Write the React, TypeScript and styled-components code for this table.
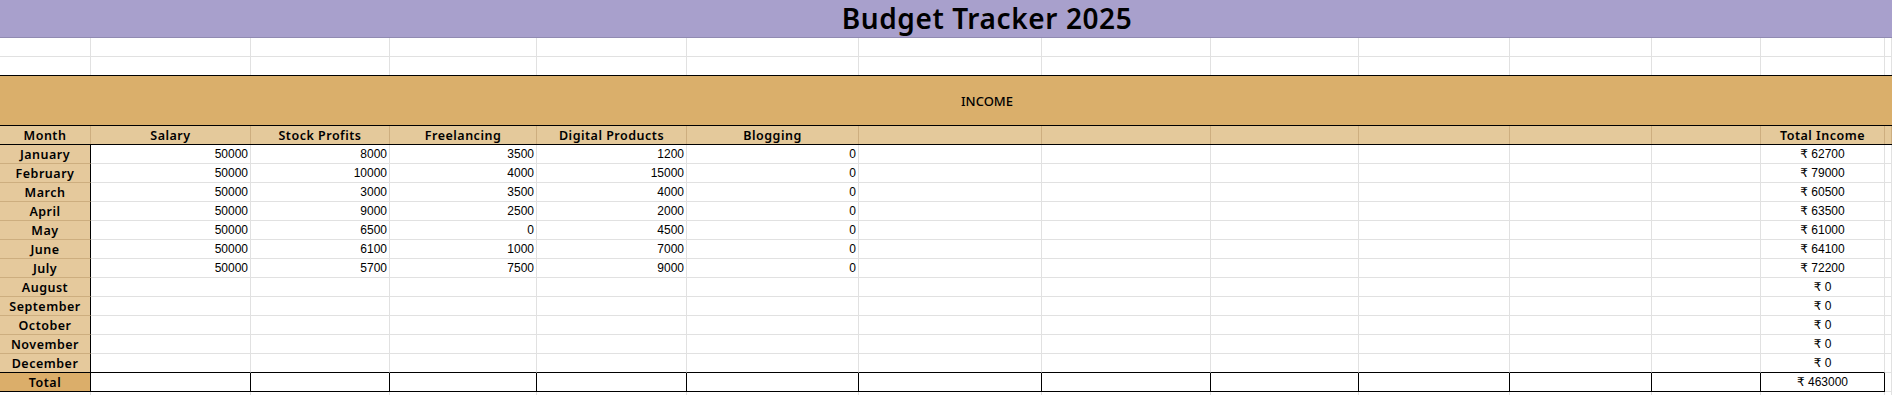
import React from 'react'
import styled, { createGlobalStyle } from 'styled-components'

// sheet column widths, last one is the sliver of the next column at the edge
const COLS = '91px 160px 139px 147px 150px 172px 183px 169px 148px 151px 142px 109px 124px 1fr'
const LABEL_FONT = `"Noto Sans", "DejaVu Sans", sans-serif`
const NUM_FONT = `"Liberation Sans", "DejaVu Sans", Arial, sans-serif`

const GRID = '#e1e1e1'
const TAN_LINE = '#cdae7f'
const BLACK = '#000000'

type Month = { name: string; values: number[] }

const months: Month[] = [
  { name: 'January', values: [50000, 8000, 3500, 1200, 0] },
  { name: 'February', values: [50000, 10000, 4000, 15000, 0] },
  { name: 'March', values: [50000, 3000, 3500, 4000, 0] },
  { name: 'April', values: [50000, 9000, 2500, 2000, 0] },
  { name: 'May', values: [50000, 6500, 0, 4500, 0] },
  { name: 'June', values: [50000, 6100, 1000, 7000, 0] },
  { name: 'July', values: [50000, 5700, 7500, 9000, 0] },
  { name: 'August', values: [] },
  { name: 'September', values: [] },
  { name: 'October', values: [] },
  { name: 'November', values: [] },
  { name: 'December', values: [] },
]

const headings = ['Salary', 'Stock Profits', 'Freelancing', 'Digital Products', 'Blogging', '', '', '', '', '', '']

const sum = (vals: number[]) => vals.reduce((a, b) => a + b, 0)

export default function App() {
  const grand = sum(months.map((m) => sum(m.values)))

  return (
    <>
      <GlobalStyle />
      <Sheet>
        <TitleBar>Budget Tracker 2025</TitleBar>

        <SheetRow $h={19}>
          {Array.from({ length: 14 }).map((_, i) => (
            <BlankCell key={i} $bottom />
          ))}
        </SheetRow>
        <SheetRow $h={18}>
          {Array.from({ length: 14 }).map((_, i) => (
            <BlankCell key={i} />
          ))}
        </SheetRow>

        <IncomeBand>INCOME</IncomeBand>

        <HeadRow>
          <HeadCell>Month</HeadCell>
          {headings.map((h, i) => (
            <HeadCell key={i}>{h}</HeadCell>
          ))}
          <HeadCell>Total Income</HeadCell>
          <HeadCell />
        </HeadRow>

        {months.map((m, i) => {
          const last = i === months.length - 1
          const line = last ? BLACK : GRID
          return (
            <SheetRow key={m.name} $h={19}>
              <MonthCell $bottom={last ? BLACK : TAN_LINE}>{m.name}</MonthCell>
              {headings.map((_, j) => (
                <ValueCell key={j} $bottom={line} $right={GRID}>
                  {m.values[j] !== undefined ? m.values[j] : ''}
                </ValueCell>
              ))}
              <SumCell $bottom={line} $right={GRID}>₹ {sum(m.values)}</SumCell>
              <ValueCell $bottom={GRID} $right={GRID} />
            </SheetRow>
          )
        })}

        <SheetRow $h={19}>
          <MonthCell $bottom={BLACK} $total>Total</MonthCell>
          {headings.map((_, j) => (
            <ValueCell key={j} $bottom={BLACK} $right={BLACK} />
          ))}
          <SumCell $bottom={BLACK} $right={BLACK}>₹ {grand}</SumCell>
          <ValueCell $bottom={GRID} $right={GRID} />
        </SheetRow>

        <SheetRow $h={4}>
          {Array.from({ length: 14 }).map((_, i) => (
            <BlankCell key={i} />
          ))}
        </SheetRow>
      </Sheet>
    </>
  )
}

const GlobalStyle = createGlobalStyle`
  html, body {
    margin: 0;
    padding: 0;
    background: #ffffff;
  }
  * {
    box-sizing: border-box;
  }
`

const Sheet = styled.div`
  width: 1892px;
  height: 395px;
  overflow: hidden;
  background: #ffffff;
  color: #000000;
`

// merged cells run past the visible edge, so their text centres further right
const TitleBar = styled.div`
  width: 1974px;
  height: 38px;
  display: flex;
  align-items: center;
  justify-content: center;
  background: #a8a0cc;
  border-bottom: 1px solid #918bb2;
  font-family: ${LABEL_FONT};
  font-size: 28px;
  font-weight: 600;
  letter-spacing: 0.6px;
  padding-bottom: 1px;
`

const IncomeBand = styled.div`
  width: 1974px;
  height: 51px;
  display: flex;
  align-items: center;
  justify-content: center;
  background: #daaf6b;
  border-top: 1px solid ${BLACK};
  border-bottom: 1px solid ${BLACK};
  font-family: ${LABEL_FONT};
  font-size: 13px;
  font-weight: 500;
`

const SheetRow = styled.div<{ $h: number }>`
  display: grid;
  grid-template-columns: ${COLS};
  height: ${(p) => p.$h}px;
`

const HeadRow = styled(SheetRow).attrs({ $h: 19 })`
  background: #e4c99b;
  border-bottom: 1px solid ${BLACK};
`

const BlankCell = styled.div<{ $bottom?: boolean }>`
  border-right: 1px solid ${GRID};
  border-bottom: ${(p) => (p.$bottom ? `1px solid ${GRID}` : 'none')};
`

const HeadCell = styled.div`
  display: flex;
  align-items: center;
  justify-content: center;
  border-right: 1px solid ${TAN_LINE};
  font-family: ${LABEL_FONT};
  font-size: 12.5px;
  font-weight: 600;
  letter-spacing: 0.5px;
  white-space: nowrap;
  overflow: hidden;
`

const MonthCell = styled.div<{ $bottom: string; $total?: boolean }>`
  display: flex;
  align-items: center;
  justify-content: center;
  background: ${(p) => (p.$total ? '#dbae6a' : '#e5c99c')};
  border-right: 1px solid ${BLACK};
  border-bottom: 1px solid ${(p) => p.$bottom};
  font-family: ${LABEL_FONT};
  font-size: 12.5px;
  font-weight: 600;
  letter-spacing: 0.5px;
  white-space: nowrap;
`

const ValueCell = styled.div<{ $bottom: string; $right: string }>`
  display: flex;
  align-items: center;
  justify-content: flex-end;
  padding-right: 2px;
  border-right: 1px solid ${(p) => p.$right};
  border-bottom: 1px solid ${(p) => p.$bottom};
  font-family: ${NUM_FONT};
  font-size: 12px;
  white-space: nowrap;
`

const SumCell = styled(ValueCell)`
  justify-content: center;
  padding-right: 0;
`
